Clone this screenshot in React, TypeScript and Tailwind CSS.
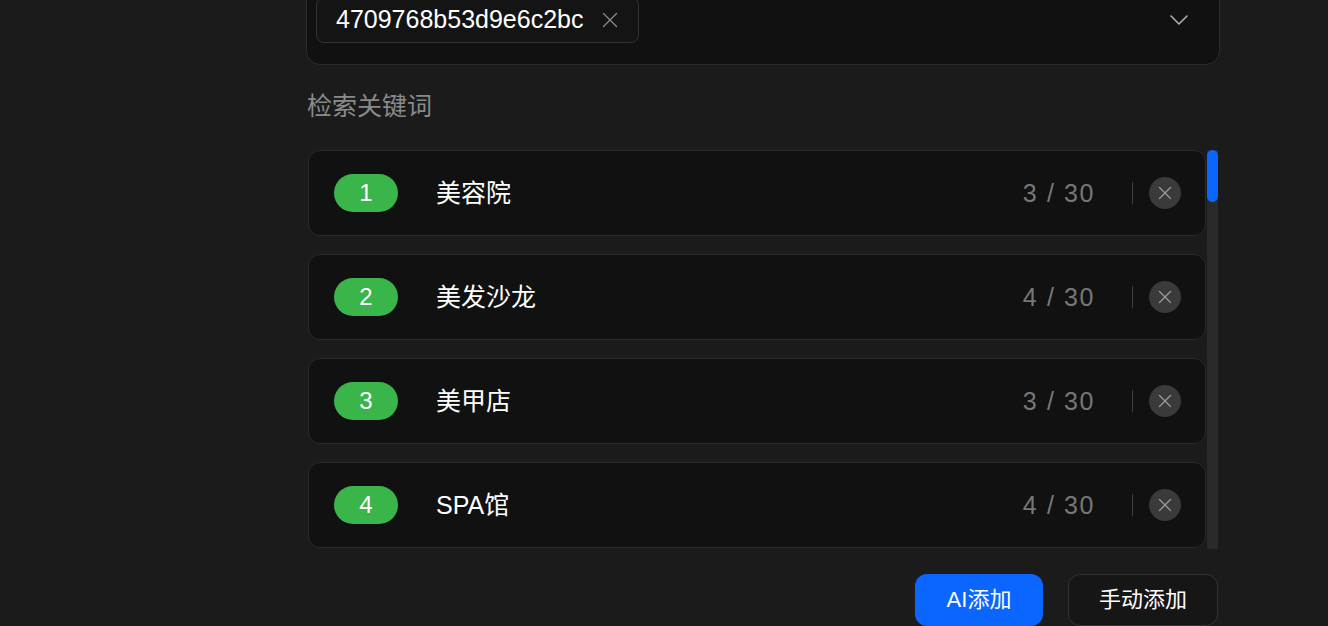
import { X, ChevronDown } from "lucide-react";

const KEYWORDS = [
  { id: 1, name: "美容院", count: 3 },
  { id: 2, name: "美发沙龙", count: 4 },
  { id: 3, name: "美甲店", count: 3 },
  { id: 4, name: "SPA馆", count: 4 },
];

const font = "font-['Liberation_Sans','Noto_Sans_CJK_SC',sans-serif]";

function KeywordRow({ id, name, count }: { id: number; name: string; count: number }) {
  return (
    <div className="flex h-[86px] shrink-0 items-center rounded-[12px] border border-[#2a2a2a] bg-[#111111] pl-[25px] pr-[24px]">
      <span className="flex h-[38px] w-[64px] items-center justify-center rounded-full bg-[#3ab54a] text-[24px] text-white">
        {id}
      </span>
      <span className="ml-[38px] mt-[3px] flex-1 text-[25px] text-white">{name}</span>
      <span className="mt-[3px] text-[25px] tracking-[1.6px] text-[#777777]">
        {count} / 30
      </span>
      <span className="ml-[37px] h-[22px] w-px bg-[#3e3e3e]" />
      <button className="ml-[16px] flex h-[32px] w-[32px] items-center justify-center rounded-full bg-[#3a3a3a]">
        <X className="h-[22px] w-[22px] text-[#9a9a9a]" strokeWidth={1.4} />
      </button>
    </div>
  );
}

export default function App() {
  return (
    <div className={`h-[626px] w-[1328px] overflow-hidden bg-[#1b1b1b] ${font}`}>
      <div className="ml-[306px] w-[914px]">
        {/* selected item box */}
        <div className="-mt-[14px] flex items-center rounded-[14px] border border-[#2c2c2c] bg-[#111111] pt-[10px] pb-[21px] pl-[9px] pr-[24px]">
          <div className="flex h-[46px] items-center rounded-[8px] border border-[#333333] bg-[#141414] pl-[19px] pr-[15px]">
            <span className="text-[25px] text-white">4709768b53d9e6c2bc</span>
            <X className="ml-[14px] h-[26px] w-[26px] text-[#8a8a8a]" strokeWidth={1.2} />
          </div>
          <div className="flex-1" />
          <ChevronDown className="h-[32px] w-[32px] text-[#b0b0b0]" strokeWidth={1.2} />
        </div>

        <div className="mt-[23px] pl-px text-[25px] text-[#8a8a8a]">检索关键词</div>

        {/* keyword list */}
        <div className="mt-[24px] flex h-[399px] pl-[2px]">
          <div className="flex w-[898px] flex-col gap-[18px] overflow-hidden">
            {KEYWORDS.map((k) => (
              <KeywordRow key={k.id} {...k} />
            ))}
          </div>
          <div className="ml-[1px] w-[11px] bg-[#2a2a2a]">
            <div className="h-[52px] w-[11px] rounded-full bg-[#0a66ff]" />
          </div>
        </div>

        <div className="mt-[25px] flex justify-end gap-[25px] pr-[2px]">
          <button className="h-[52px] w-[128px] rounded-[12px] bg-[#0a66ff] text-[22px] text-white">
            AI添加
          </button>
          <button className="h-[52px] w-[150px] rounded-[12px] border border-[#333333] bg-[#161616] text-[22px] text-white">
            手动添加
          </button>
        </div>
      </div>
    </div>
  );
}
